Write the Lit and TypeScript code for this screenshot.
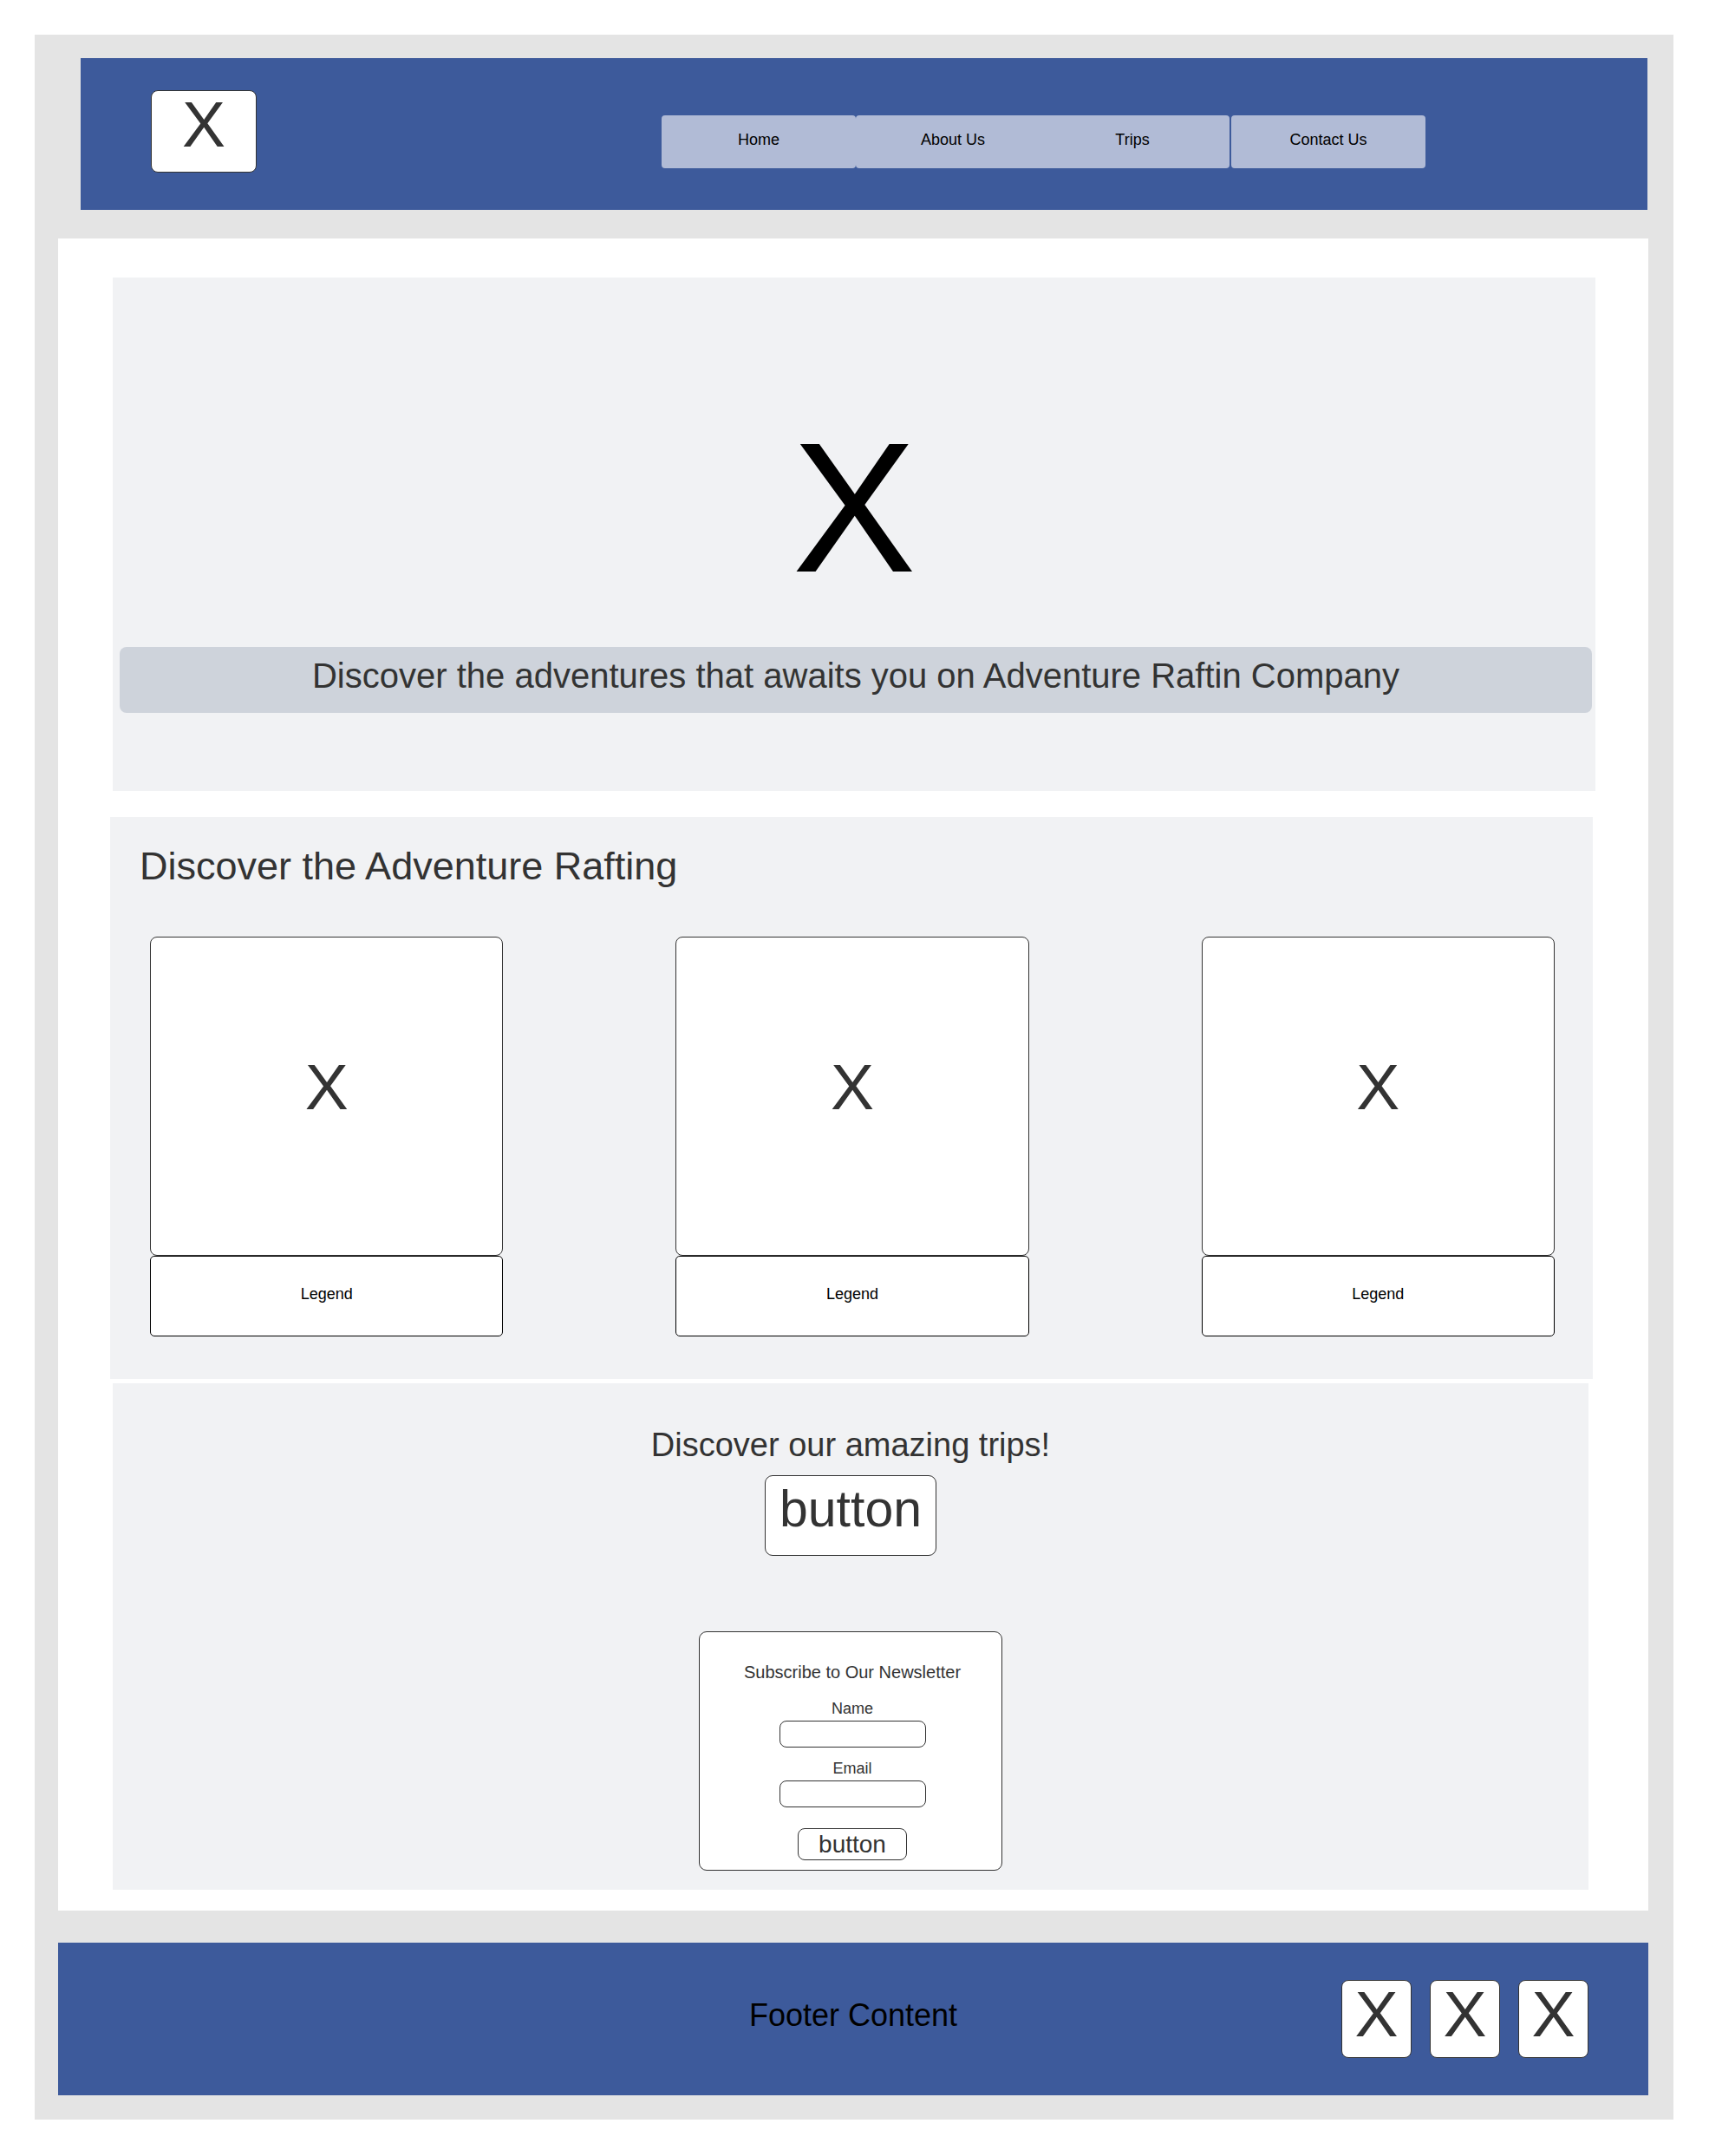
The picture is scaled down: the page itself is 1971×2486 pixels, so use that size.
import { LitElement, html, css } from "lit";
import { customElement, property } from "lit/decorators.js";

const NAV_ITEMS = [
  { label: "Home", href: "#home" },
  { label: "About Us", href: "#about" },
  { label: "Trips", href: "#trips" },
  { label: "Contact Us", href: "#contact" },
];

const CARDS = ["Legend", "Legend", "Legend"];

const SOCIAL = ["#social-1", "#social-2", "#social-3"];

/** Navigation bar with the logo box and the page links. */
@customElement("site-header")
export class SiteHeader extends LitElement {
  static styles = css`
    :host {
      display: block;
    }
    .bar {
      display: flex;
      align-items: flex-start;
      justify-content: space-between;
      padding: 37px 256px 43px 81px;
      background: #3d5a9b;
    }
    .logo {
      box-sizing: border-box;
      width: 122px;
      height: 95px;
      border: 1px solid #333;
      border-radius: 8px;
      background: #fff;
      color: #333;
      font-size: 75px;
      line-height: 76px;
      text-align: center;
      text-decoration: none;
    }
    .links {
      display: flex;
      margin: 29px 0 0;
      padding: 0;
      list-style: none;
    }
    .link {
      display: flex;
      align-items: center;
      justify-content: center;
      box-sizing: border-box;
      width: 224px;
      height: 61px;
      padding-bottom: 4px;
      border-radius: 4px;
      background: #b1bbd6;
      color: #000;
      font-size: 18px;
      text-decoration: none;
    }
    .item:nth-child(3) {
      margin-left: -17px;
    }
    .item:nth-child(4) {
      margin-left: 2px;
    }
  `;

  render() {
    return html`
      <header class="bar">
        <a class="logo" href="#home">X</a>
        <nav>
          <ul class="links">
            ${NAV_ITEMS.map(
              (item) => html`<li class="item"><a class="link" href=${item.href}>${item.label}</a></li>`
            )}
          </ul>
        </nav>
      </header>
    `;
  }
}

/** Picture placeholder with a legend box under it. */
@customElement("picture-card")
export class PictureCard extends LitElement {
  static styles = css`
    :host {
      display: block;
    }
    .card {
      margin: 0;
    }
    .picture,
    .legend {
      display: flex;
      align-items: center;
      justify-content: center;
      box-sizing: border-box;
      background: #fff;
    }
    .picture {
      height: 368px;
      padding-bottom: 22px;
      border: 1px solid #333;
      border-radius: 8px;
      color: #333;
      font-size: 75px;
      line-height: 75px;
    }
    .legend {
      height: 93px;
      padding-bottom: 5px;
      border: 1px solid #000;
      border-radius: 5px;
      color: #000;
      font-size: 18px;
    }
  `;

  @property() legend = "";

  render() {
    return html`
      <figure class="card">
        <div class="picture">X</div>
        <figcaption class="legend">${this.legend}</figcaption>
      </figure>
    `;
  }
}

/** Newsletter sign-up form. */
@customElement("newsletter-form")
export class NewsletterForm extends LitElement {
  static styles = css`
    :host {
      display: block;
    }
    .form {
      display: flex;
      flex-direction: column;
      align-items: center;
      box-sizing: border-box;
      width: 350px;
      padding: 34px 0 11px 4px;
      border: 1px solid #333;
      border-radius: 9px;
      background: #fff;
      color: #333;
    }
    .title {
      margin: 0 0 20px;
      font-size: 20px;
      line-height: 24px;
      font-weight: 400;
    }
    .label {
      margin-bottom: 4px;
      font-size: 18px;
      line-height: 20px;
    }
    .field {
      box-sizing: border-box;
      width: 169px;
      height: 31px;
      margin: 0 0 14px;
      padding: 0 8px;
      border: 1px solid #333;
      border-radius: 8px;
      background: #fff;
      font: inherit;
      font-size: 18px;
    }
    .send {
      box-sizing: border-box;
      width: 126px;
      height: 37px;
      margin-top: 10px;
      padding: 0;
      border: 1px solid #333;
      border-radius: 8px;
      background: #fff;
      color: #333;
      font: inherit;
      font-size: 28px;
      line-height: 35px;
    }
  `;

  render() {
    return html`
      <form class="form" @submit=${(e: Event) => e.preventDefault()}>
        <h3 class="title">Subscribe to Our Newsletter</h3>
        <label class="label" for="name">Name</label>
        <input class="field" id="name" name="name" type="text" />
        <label class="label" for="email">Email</label>
        <input class="field" id="email" name="email" type="email" />
        <button class="send" type="submit">button</button>
      </form>
    `;
  }
}

/** Footer text with the row of icon boxes at its right. */
@customElement("site-footer")
export class SiteFooter extends LitElement {
  static styles = css`
    :host {
      display: block;
    }
    .bar {
      display: grid;
      grid-template-columns: 1fr auto 1fr;
      align-items: center;
      min-height: 176px;
      background: #3d5a9b;
    }
    .text {
      grid-column: 2;
      margin: 0;
      padding-bottom: 9px;
      color: #000;
      font-size: 36px;
    }
    .icons {
      display: flex;
      justify-content: flex-end;
      gap: 21px;
      padding-right: 69px;
    }
    .icon {
      box-sizing: border-box;
      width: 81px;
      height: 90px;
      border: 1px solid #333;
      border-radius: 8px;
      background: #fff;
      color: #333;
      font-size: 75px;
      line-height: 76px;
      text-align: center;
      text-decoration: none;
    }
  `;

  render() {
    return html`
      <footer class="bar">
        <p class="text">Footer Content</p>
        <div class="icons">${SOCIAL.map((href) => html`<a class="icon" href=${href}>X</a>`)}</div>
      </footer>
    `;
  }
}

@customElement("app-root")
export class AppRoot extends LitElement {
  static styles = css`
    :host {
      display: block;
      padding: 40px 41px 42px 40px;
      background: #fff;
      font-family: "Liberation Sans", Arial, sans-serif;
    }
    .frame {
      padding: 27px 29px 28px 27px;
      background: #e4e4e4;
    }
    .header {
      margin: 0 1px 33px 26px;
    }
    .main {
      margin-bottom: 37px;
      padding: 45px 0 24px;
      background: #fff;
    }
    .panel {
      background: #f1f2f4;
      color: #333;
    }
    .hero {
      margin: 0 61px 30px 63px;
      padding: 158px 0 90px;
    }
    .hero-picture {
      margin-bottom: 54px;
      color: #000;
      font-size: 214px;
      line-height: 214px;
      text-align: center;
    }
    .banner {
      margin: 0 4px 0 8px;
      padding: 10px 0 20px;
      border-radius: 8px;
      background: #ced3db;
      font-size: 40px;
      line-height: 46px;
      font-weight: 400;
      text-align: center;
    }
    .gallery {
      margin: 0 64px 5px 60px;
      padding: 32px 44px 49px 46px;
    }
    .gallery-title {
      margin: 0 0 56px -12px;
      font-size: 45px;
      line-height: 50px;
      font-weight: 400;
    }
    .cards {
      display: grid;
      grid-template-columns: repeat(3, minmax(0, 1fr));
      gap: 199px;
    }
    .trips {
      display: flex;
      flex-direction: column;
      align-items: center;
      margin: 0 69px 0 63px;
      padding: 49px 0 22px;
    }
    .trips-title {
      margin: 0 0 13px;
      font-size: 38px;
      line-height: 44px;
      font-weight: 400;
    }
    .trips-button {
      box-sizing: border-box;
      width: 198px;
      height: 93px;
      margin-bottom: 87px;
      padding: 0 0 16px;
      border: 1px solid #333;
      border-radius: 9px;
      background: #fff;
      color: #333;
      font: inherit;
      font-size: 59px;
      line-height: 60px;
    }
  `;

  render() {
    return html`
      <div class="frame">
        <site-header class="header"></site-header>
        <main class="main">
          <section class="panel hero">
            <div class="hero-picture">X</div>
            <h1 class="banner">Discover the adventures that awaits you on Adventure Raftin Company</h1>
          </section>
          <section class="panel gallery">
            <h2 class="gallery-title">Discover the Adventure Rafting</h2>
            <div class="cards">
              ${CARDS.map((legend) => html`<picture-card .legend=${legend}></picture-card>`)}
            </div>
          </section>
          <section class="panel trips">
            <h2 class="trips-title">Discover our amazing trips!</h2>
            <button class="trips-button" type="button">button</button>
            <newsletter-form></newsletter-form>
          </section>
        </main>
        <site-footer></site-footer>
      </div>
    `;
  }
}
